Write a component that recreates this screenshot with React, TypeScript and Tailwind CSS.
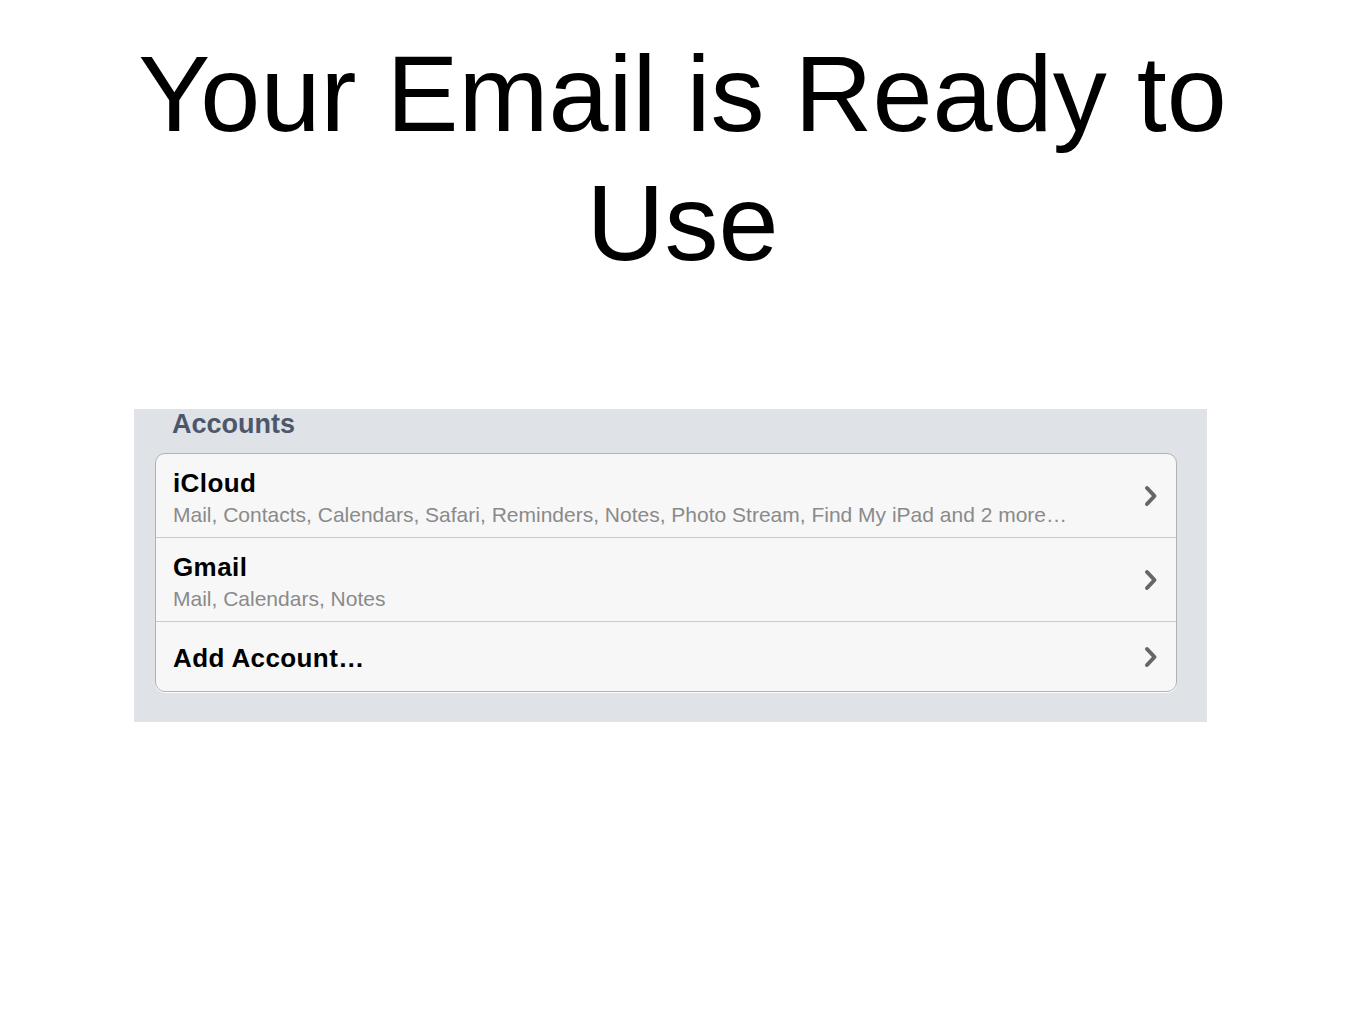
import React from "react";

type Account = {
  name: string;
  detail?: string;
};

const accounts: Account[] = [
  {
    name: "iCloud",
    detail:
      "Mail, Contacts, Calendars, Safari, Reminders, Notes, Photo Stream, Find My iPad and 2 more…",
  },
  { name: "Gmail", detail: "Mail, Calendars, Notes" },
  { name: "Add Account…" },
];

function Chevron() {
  return (
    <svg width="14" height="22" viewBox="0 0 14 22" className="shrink-0">
      <path
        d="M3 3 L10.5 11 L3 19"
        fill="none"
        stroke="#666666"
        strokeWidth="4"
        strokeLinecap="round"
        strokeLinejoin="round"
      />
    </svg>
  );
}

export default function App() {
  return (
    <div
      className="w-[1365px] h-[1024px] bg-white flex flex-col items-center"
      style={{ fontFamily: '"Liberation Sans", Arial, sans-serif' }}
    >
      <h1 className="mt-[29px] w-[1140px] text-center text-[108px] leading-[129px] text-black font-normal">
        Your Email is Ready to Use
      </h1>

      <div className="self-start ml-[134px] mt-[122px] w-[1073px] h-[313px] bg-[#dfe2e7] pl-[21px] pr-[30px] pt-[2px]">
        <div className="pl-[17px] text-[27px] leading-[26px] font-bold text-[#4d576b]">
          Accounts
        </div>

        <div className="mt-[16px] rounded-[10px] border border-[#aeb2b8] bg-[#f7f7f7] overflow-hidden shadow-[0_1px_0_#ffffff]">
          {accounts.map((a) => (
            <div
              key={a.name}
              className={
                a.detail
                  ? "flex items-center justify-between h-[84px] border-b border-[#c9cacc] pl-[17px] pr-[18px]"
                  : "flex items-center justify-between h-[69px] pl-[17px] pr-[18px]"
              }
            >
              <div className={a.detail ? "flex flex-col pt-[4px]" : "flex flex-col pt-[3px]"}>
                <div className="text-[26px] leading-[30px] font-bold text-black tracking-[0.4px]">
                  {a.name}
                </div>
                {a.detail && (
                  <div className="mt-[4px] text-[21px] leading-[26px] text-[#8a8a8a]">
                    {a.detail}
                  </div>
                )}
              </div>
              <Chevron />
            </div>
          ))}
        </div>
      </div>
    </div>
  );
}
